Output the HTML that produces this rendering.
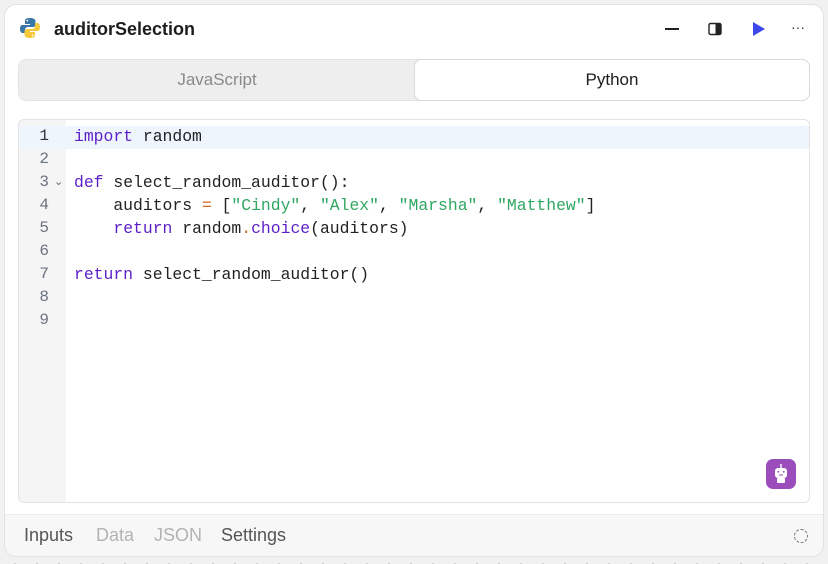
<!DOCTYPE html>
<html><head><style>
*{margin:0;padding:0;box-sizing:border-box}
body{width:828px;height:564px;background:#f1f1f1;background-image:radial-gradient(#cfcfcf 1px,transparent 1.2px);background-size:22px 22px;background-position:4px 3px;font-family:"Liberation Sans",sans-serif;position:relative;overflow:hidden}
.card{position:absolute;left:4px;top:4px;width:820px;height:553px;background:#fff;border:1px solid #e2e2e2;border-radius:12px;overflow:hidden}
.title{position:absolute;left:49px;top:14px;font-size:18px;font-weight:bold;color:#1d1d1d}
.tabs{position:absolute;left:13px;top:54px;width:792px;height:42px;background:#eeeeee;border:1px solid #e3e3e3;border-radius:8px}
.tab{position:absolute;top:0;height:40px;line-height:40px;text-align:center;font-size:17px}
.t1{left:0;width:396px;color:#8a8a8a}
.t2{left:395px;width:396px;background:#fff;border:1px solid #dadada;border-radius:8px;color:#1d1d1d;top:-1px;height:42px}
.ed{position:absolute;left:13px;top:114px;width:792px;height:384px;border:1px solid #e2e2e2;border-radius:6px;overflow:hidden;background:#fff}
.gut{position:absolute;left:0;top:0;width:47px;height:100%;background:#f5f5f5}
.hl{position:absolute;left:0;top:6px;width:100%;height:23px;background:#eef5fd}
.ln{position:absolute;left:0;width:30px;text-align:right;font-family:"Liberation Mono",monospace;font-size:16px;color:#6b7280;line-height:23px}
.code{position:absolute;left:55px;top:5px;font-family:"Liberation Mono",monospace;font-size:16.4px;line-height:23px;color:#222;white-space:pre}
.k{color:#5b1fc9}.s{color:#2fa662}.o{color:#d2691e}.f{color:#5b1fc9}
.foot{position:absolute;left:0;top:509px;width:100%;height:44px;background:#f7f7f7;border-top:1px solid #ececec}
.ft{position:absolute;top:10px;font-size:18px}
</style></head><body>
<div class="card">
<svg style="position:absolute;left:14px;top:12px" width="22" height="22" viewBox="0 0 22 22"><path d="M11 1c-5 0-5 2-5 3v3h5v1H3.5C1.5 8 1 10 1 12s.8 4 2.5 4H6v-3c0-2 1.5-3 3-3h5c1.5 0 2.5-1 2.5-2.5V4C16.5 2 14 1 11 1z" fill="#3b77a8"/><path d="M11 21c5 0 5-2 5-3v-3h-5v-1h7.5c2 0 2.5-2 2.5-4s-.8-4-2.5-4H16v3c0 2-1.5 3-3 3H8c-1.5 0-2.5 1-2.5 2.5V18C5.5 20 8 21 11 21z" fill="#f5c93a"/><circle cx="8.3" cy="3.6" r=".9" fill="#fff"/><circle cx="13.7" cy="18.4" r=".9" fill="#fff"/></svg>
<div class="title">auditorSelection</div>
<div style="position:absolute;left:660px;top:23px;width:14px;height:1.5px;background:#222"></div>
<svg style="position:absolute;left:703px;top:17px" width="14" height="14" viewBox="0 0 14 14"><rect x="1" y="1.5" width="12" height="11" rx="1.5" fill="none" stroke="#222" stroke-width="1.4"/><rect x="7.5" y="2" width="5" height="10" fill="#222"/></svg>
<svg style="position:absolute;left:747px;top:16px" width="14" height="16" viewBox="0 0 14 16"><path d="M1 1 L13 8 L1 15Z" fill="#3b47e8"/></svg>
<div style="position:absolute;left:786px;top:14px;font-size:14px;color:#333">···</div>
<div class="tabs"><div class="tab t1">JavaScript</div><div class="tab t2">Python</div></div>
<div class="ed">
<div class="gut"></div>
<div class="hl"></div>
<div class="ln" style="top:5px;color:#333">1</div>
<div class="ln" style="top:28px">2</div>
<div class="ln" style="top:51px">3</div>
<div style="position:absolute;left:35px;top:55px;font-size:11px;color:#666">⌄</div>
<div class="ln" style="top:74px">4</div>
<div class="ln" style="top:97px">5</div>
<div class="ln" style="top:120px">6</div>
<div class="ln" style="top:143px">7</div>
<div class="ln" style="top:166px">8</div>
<div class="ln" style="top:189px">9</div>
<div class="code"><span class="k">import</span> random

<span class="k">def</span> select_random_auditor():
    auditors <span class="o">=</span> [<span class="s">"Cindy"</span>, <span class="s">"Alex"</span>, <span class="s">"Marsha"</span>, <span class="s">"Matthew"</span>]
    <span class="k">return</span> random<span class="o">.</span><span class="f">choice</span>(auditors)

<span class="k">return</span> select_random_auditor()</div>
<div style="position:absolute;left:747px;top:339px;width:30px;height:30px;border-radius:7px;background:#9b4dbb">
<svg width="30" height="30" viewBox="0 0 30 30"><rect x="14.3" y="5" width="1.4" height="4" fill="#fff"/><rect x="9" y="9" width="12" height="10" rx="3" fill="#fff"/><rect x="11" y="19" width="8" height="5" rx="1" fill="#fff"/><rect x="11.5" y="12" width="1.6" height="1.6" fill="#9b4dbb"/><rect x="16.9" y="12" width="1.6" height="1.6" fill="#9b4dbb"/><rect x="13" y="15.5" width="4" height="1" fill="#9b4dbb"/></svg></div>
</div>
<div class="foot">
<div class="ft" style="left:19px;color:#555">Inputs</div>
<div class="ft" style="left:91px;color:#b3b3b3">Data</div>
<div class="ft" style="left:149px;color:#b3b3b3">JSON</div>
<div class="ft" style="left:216px;color:#555">Settings</div>
<div style="position:absolute;left:789px;top:14px;width:14px;height:14px;border:1.3px dashed #777;border-radius:50%"></div>
</div>
</div>
</body></html>
